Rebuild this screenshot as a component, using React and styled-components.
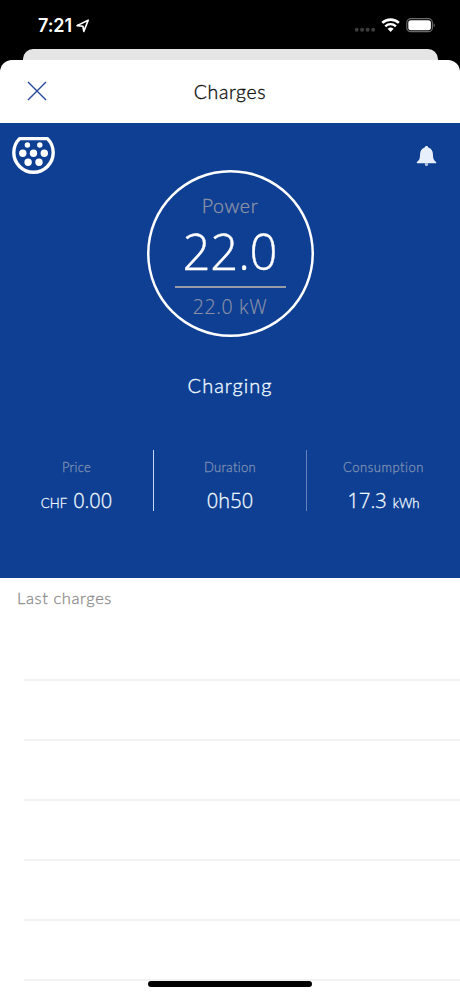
import React from "react";
import styled, { createGlobalStyle } from "styled-components";

const Global = createGlobalStyle`
  *, *::before, *::after { box-sizing: border-box; }
  body { margin: 0; background: #000; font-family: Lato, "Open Sans", sans-serif; }
`;

const Phone = styled.div`
  width: 460px;
  height: 996px;
  overflow: hidden;
  display: flex;
  flex-direction: column;
  background: #000;
`;

const StatusBar = styled.div`
  height: 49px;
  flex: none;
  display: flex;
  align-items: center;
  justify-content: space-between;
  padding: 2px 24px 0 38px;
`;

const Clock = styled.div`
  display: flex;
  align-items: center;
  gap: 4px;
  color: #fff;
  font: 600 18px/22px Inter, sans-serif;
  letter-spacing: -0.1px;
`;

const Indicators = styled.div`
  display: flex;
  align-items: center;
`;

const BackCard = styled.div`
  height: 11px;
  flex: none;
  margin: 0 22.5px;
  border-radius: 10px 10px 0 0;
  background: #e5e5e5;
`;

const SheetBackdrop = styled.div`
  flex: 1;
  display: flex;
  flex-direction: column;
  background: #fff;
  border-radius: 12px 12px 0 0;
  overflow: hidden;
`;

const NavBar = styled.header`
  height: 62.5px;
  flex: none;
  display: grid;
  grid-template-columns: 74px 1fr 74px;
  align-items: center;
  justify-items: center;
`;

const Title = styled.h1`
  margin: 1px 0 0;
  font-weight: 300;
  font-size: 19.5px;
  line-height: 24px;
  letter-spacing: 0.6px;
  -webkit-text-stroke: 0.35px;
  color: #111;
`;

const IconButton = styled.button`
  display: flex;
  padding: 0;
  border: 0;
  background: none;
`;

const Panel = styled.section`
  height: 455.5px;
  flex: none;
  background: #0f3f93;
  display: flex;
  flex-direction: column;
`;

const PanelTop = styled.div`
  height: 214px;
  display: grid;
  grid-template-columns: 1fr 167px 1fr;
  align-items: start;
`;

const PlugSlot = styled.div`
  padding: 13.5px 0 0 11px;
  line-height: 0;
`;

const BellSlot = styled.div`
  padding: 22px 23px 0 0;
  line-height: 0;
  justify-self: end;
`;

const Gauge = styled.div`
  width: 167px;
  height: 167px;
  margin-top: 47px;
  padding-top: 2px;
  box-shadow: inset 0 0 0 2.5px #fff;
  border-radius: 50%;
  display: flex;
  flex-direction: column;
  align-items: center;
`;

const GaugeLabel = styled.div`
  margin-top: 22px;
  font-weight: 300;
  font-size: 19.5px;
  line-height: 24px;
  letter-spacing: 0.6px;
  -webkit-text-stroke: 0.4px;
  color: #8990a6;
`;

const GaugeValue = styled.div`
  margin-top: 3px;
  font-family: "Open Sans", sans-serif;
  font-weight: 300;
  font-size: 49px;
  line-height: 60px;
  letter-spacing: -0.2px;
  -webkit-text-stroke: 0.4px;
  color: #fff;
`;

const GaugeRule = styled.div`
  width: 111px;
  height: 2px;
  margin-top: 5px;
  background: #9a9ba8;
`;

const GaugeMax = styled.div`
  margin-top: 7px;
  font-family: "Open Sans", sans-serif;
  font-weight: 300;
  font-size: 19.5px;
  line-height: 24px;
  letter-spacing: 0.65px;
  -webkit-text-stroke: 0.2px;
  color: #8990a6;
`;

const State = styled.div`
  margin-top: 35px;
  text-align: center;
  font-weight: 300;
  font-size: 20px;
  line-height: 26px;
  letter-spacing: 1px;
  -webkit-text-stroke: 0.35px;
  color: #eefaff;
`;

const Stats = styled.div`
  height: 62px;
  margin-top: 52px;
  display: grid;
  grid-template-columns: 154px 153px 153px;
  grid-template-rows: 61px;
`;

const Stat = styled.div`
  display: flex;
  flex-direction: column;
  align-items: center;
  border-right: ${(p) => (p.$rule ? `1px solid ${p.$rule}` : "0")};
`;

const StatLabel = styled.div`
  margin-top: 8px;
  font-weight: 300;
  font-size: 13px;
  line-height: 18px;
  letter-spacing: ${(p) => p.$track}px;
  -webkit-text-stroke: 0.3px;
  color: #7c8fb2;
`;

const StatValue = styled.div`
  display: flex;
  align-items: baseline;
  gap: 6px;
  margin-top: 12px;
  font-family: "Open Sans", sans-serif;
  font-weight: 300;
  font-size: 20px;
  line-height: 26px;
  letter-spacing: ${(p) => p.$track}px;
  -webkit-text-stroke: 0.3px;
  color: #f0faff;
`;

const Unit = styled.span`
  font-family: Lato, sans-serif;
  font-weight: 300;
  font-size: 13.2px;
  letter-spacing: 0;
`;

const ListTitle = styled.h2`
  height: 43px;
  flex: none;
  margin: 0;
  padding: 8px 17px 0;
  font-weight: 300;
  font-size: 16.5px;
  line-height: 24px;
  letter-spacing: 0.6px;
  -webkit-text-stroke: 0.3px;
  color: #8c8c8c;
`;

const Rows = styled.div`
  height: 361px;
  flex: none;
  padding-left: 24px;
`;

const Row = styled.div`
  height: 60px;
  border-bottom: 2px solid #f2f2f2;
`;

const HomeIndicator = styled.div`
  width: 164px;
  height: 6px;
  flex: none;
  margin-top: -1px;
  align-self: center;
  border-radius: 3px;
  background: #000;
`;

const LocationIcon = () => (
  <svg width="14" height="14" viewBox="0 0 14 14" fill="none">
    <path d="M1 6.6 12.2 1.2 7.8 12.4 6.9 7.2Z" stroke="#fff" strokeWidth="1.6" strokeLinejoin="round" />
  </svg>
);

const SignalDots = () => (
  <svg width="22" height="22" viewBox="0 0 22 22" fill="#3c3c3c">
    <circle cx="2.7" cy="14.7" r="2" />
    <circle cx="8.1" cy="14.7" r="2" />
    <circle cx="13.6" cy="14.7" r="2" />
    <circle cx="19.1" cy="14.7" r="2" />
  </svg>
);

const WifiIcon = () => (
  <svg width="30" height="22" viewBox="0 0 30 22" fill="none" stroke="#fff">
    <path d="M6.3 7.9a12.2 12.2 0 0 1 16.6 0" strokeWidth="2.6" />
    <path d="M9.3 11.3a7.6 7.6 0 0 1 10.6 0" strokeWidth="2.4" />
    <path d="M11.6 13.8a4.5 4.5 0 0 1 6 0L14.6 17.1Z" fill="#fff" stroke="none" />
  </svg>
);

const BatteryIcon = () => (
  <svg width="30" height="22" viewBox="0 0 30 22">
    <rect x="0.8" y="3.7" width="25.6" height="13" rx="4" fill="none" stroke="#6a6a6a" strokeWidth="1.2" />
    <rect x="2.3" y="5.2" width="22.6" height="10" rx="2.6" fill="#fff" />
    <path d="M27.6 8.2v4.2c1.6-.6 1.6-3.6 0-4.2Z" fill="#6a6a6a" />
  </svg>
);

const CloseIcon = () => (
  <svg width="20" height="20" viewBox="0 0 20 20" stroke="#26489a" strokeWidth="1.4">
    <path d="M1 1l18 18M19 1 1 19" />
  </svg>
);

const PlugIcon = () => (
  <svg width="45" height="40" viewBox="0 0 45 40">
    <path d="M8.6 2.6H36.4A19.7 19.7 0 1 1 8.6 2.6Z" fill="none" stroke="#fff" strokeWidth="3.4" strokeLinejoin="round" />
    <g fill="#fff">
      <circle cx="16.4" cy="9" r="2.7" />
      <circle cx="28.8" cy="9" r="2.7" />
      <circle cx="11.8" cy="17.2" r="3.7" />
      <circle cx="22.5" cy="17.2" r="3.7" />
      <circle cx="33.3" cy="17.2" r="3.7" />
      <circle cx="17.1" cy="26.2" r="3.7" />
      <circle cx="28" cy="26.2" r="3.7" />
    </g>
  </svg>
);

const BellIcon = () => (
  <svg width="21" height="23" viewBox="0 0 21 23" fill="#e8effc">
    <path d="M10.5 1c1 0 1.7.6 1.8 1.5 3.1.8 4.5 3.4 4.6 6.6.1 4.1.6 6.3 3.1 7.9.5.4.3 1.3-.4 1.3H1.4c-.7 0-.9-.9-.4-1.3 2.5-1.6 3-3.8 3.1-7.9.1-3.2 1.5-5.8 4.6-6.6.1-.9.8-1.5 1.8-1.5Z" />
    <path d="M8.9 18.3h3.2v1.4c0 1.8-3.2 1.8-3.2 0Z" opacity=".75" />
  </svg>
);

const stats = [
  { label: "Price", before: "CHF", value: "0.00", rule: "#c3d8f3", labelTrack: 0.3, track: 0 },
  { label: "Duration", value: "0h50", rule: "#6684bb", labelTrack: 0.35, track: 0.1 },
  { label: "Consumption", value: "17.3", after: "kWh", labelTrack: 0.55, track: 0.1 },
];

export default function App() {
  return (
    <Phone>
      <Global />
      <StatusBar>
        <Clock>7:21<LocationIcon /></Clock>
        <Indicators>
          <SignalDots />
          <WifiIcon />
          <BatteryIcon />
        </Indicators>
      </StatusBar>
      <BackCard />
      <SheetBackdrop>
        <NavBar>
          <IconButton aria-label="Close"><CloseIcon /></IconButton>
          <Title>Charges</Title>
        </NavBar>
        <Panel>
          <PanelTop>
            <PlugSlot><PlugIcon /></PlugSlot>
            <Gauge>
              <GaugeLabel>Power</GaugeLabel>
              <GaugeValue>22.0</GaugeValue>
              <GaugeRule />
              <GaugeMax>22.0 kW</GaugeMax>
            </Gauge>
            <BellSlot><BellIcon /></BellSlot>
          </PanelTop>
          <State>Charging</State>
          <Stats>
            {stats.map((s) => (
              <Stat key={s.label} $rule={s.rule}>
                <StatLabel $track={s.labelTrack}>{s.label}</StatLabel>
                <StatValue $track={s.track}>
                  {s.before && <Unit>{s.before}</Unit>}
                  <span>{s.value}</span>
                  {s.after && <Unit>{s.after}</Unit>}
                </StatValue>
              </Stat>
            ))}
          </Stats>
        </Panel>
        <ListTitle>Last charges</ListTitle>
        <Rows>
          {[0, 1, 2, 3, 4, 5].map((i) => <Row key={i} />)}
        </Rows>
        <HomeIndicator />
      </SheetBackdrop>
    </Phone>
  );
}
